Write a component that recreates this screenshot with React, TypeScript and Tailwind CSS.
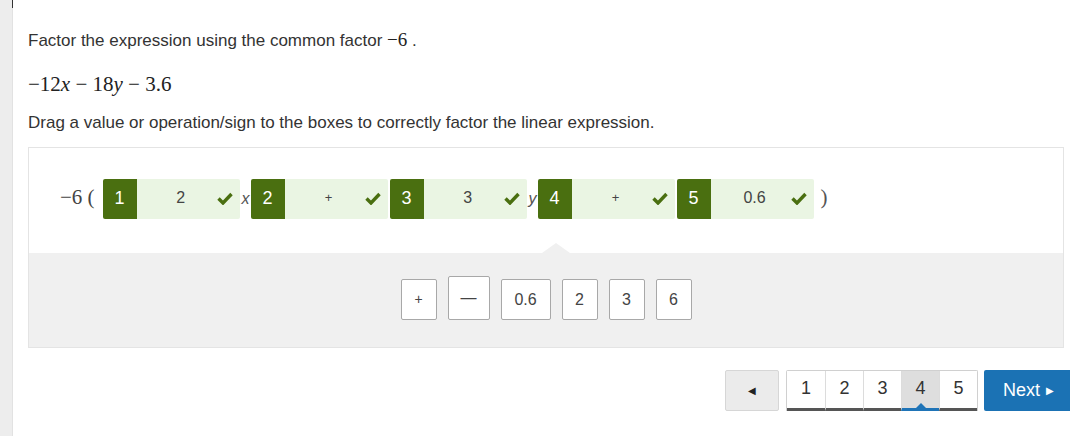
import React from "react";

const GREEN = "bg-[#4a6f10]";

function Check() {
  return (
    <svg width="16" height="13" viewBox="0 0 16 13" className="shrink-0">
      <path d="M1.5 6.5 L6 11 L14.5 2" fill="none" stroke="#4a6f10" strokeWidth="3.4" strokeLinecap="butt" strokeLinejoin="miter" />
    </svg>
  );
}

function Slot({ n, value, small }: { n: number; value: string; small?: boolean }) {
  return (
    <div className="flex h-[40px] ml-[2px]">
      <div className={`${GREEN} w-[34px] h-[40px] rounded-l-[2px] flex items-center justify-center text-white text-[18px]`}>{n}</div>
      <div className="w-[103px] h-[40px] bg-[#eaf5e3] rounded-r-[2px] flex items-center pl-[8px] pr-[7px]">
        <span className={`flex-1 text-center text-[#444] ${small ? "text-[13px]" : "text-[16px]"} -mt-[2px]`}>{value}</span>
        <Check />
      </div>
    </div>
  );
}

function Tile({ children, w, tall }: { children: React.ReactNode; w: number; tall?: boolean }) {
  return (
    <div
      className={`bg-white border border-[#a8a8a8] rounded-[2px] flex items-center justify-center text-[#444] ${tall ? "h-[44px] -mt-[3px]" : "h-[41px]"}`}
      style={{ width: w }}
    >
      {children}
    </div>
  );
}

export default function App() {
  return (
    <div className="flex w-[1070px] h-[436px] overflow-hidden bg-white font-['Liberation_Sans',Arial,sans-serif] text-[#333]">
      <div className="w-[13px] shrink-0 bg-[#ededed] border-r border-[#e2e2e2] flex justify-end">
        <div className="w-px h-[8px] bg-[#333] -mr-px" />
      </div>
      <div className="flex-1 pl-[15px] flex flex-col">
        <p className="text-[17px] mt-[30px] leading-[20px]">
          Factor the expression using the common factor{" "}
          <span className="font-['Liberation_Serif',serif] text-[19px] text-[#222]">−6</span> .
        </p>
        <p className="mt-[21px] leading-[24px] text-[21px] font-['Liberation_Serif',serif] text-[#222]">
          −12<i>x</i> − 18<i>y</i> − 3.6
        </p>
        <p className="text-[17px] mt-[17px] leading-[20px]">
          Drag a value or operation/sign to the boxes to correctly factor the linear expression.
        </p>
        <div className="mt-[14px] mr-[6px] border border-[#e4e4e4] flex flex-col">
          <div className="h-[105px] bg-white flex items-center pl-[31px] pb-[4px]">
            <span className="font-['Liberation_Serif',serif] text-[21px] text-[#444] mr-[6px] -mt-[2px]">−6 (</span>
            <Slot n={1} value="2" />
            <i className="font-['Liberation_Sans',sans-serif] text-[16px] text-[#555] ml-[2px] -mr-[1px]">x</i>
            <Slot n={2} value="+" small />
            <Slot n={3} value="3" />
            <i className="font-['Liberation_Sans',sans-serif] text-[16px] text-[#555] ml-[2px] -mr-[1px]">y</i>
            <Slot n={4} value="+" small />
            <Slot n={5} value="0.6" />
            <span className="font-['Liberation_Serif',serif] text-[21px] text-[#555] ml-[7px] -mt-[2px]">)</span>
          </div>
          <div className="relative h-[94px] bg-[#f0f0f0] flex items-start justify-center pt-[26px] gap-[11px]">
            <div className="absolute left-[513px] -top-[10px] w-0 h-0 border-l-[14px] border-r-[14px] border-b-[10px] border-l-transparent border-r-transparent border-b-[#f0f0f0]" />
            <Tile w={36}><span className="text-[14px]">+</span></Tile>
            <Tile w={42} tall><span className="text-[16px]">—</span></Tile>
            <Tile w={50}><span className="text-[16px]">0.6</span></Tile>
            <Tile w={36}><span className="text-[16px]">2</span></Tile>
            <Tile w={36}><span className="text-[16px]">3</span></Tile>
            <Tile w={36}><span className="text-[16px]">6</span></Tile>
          </div>
        </div>
        <div className="mt-[22px] flex justify-end items-start">
          <div className="w-[54px] h-[41px] bg-[#ebebeb] border border-[#d6d6d6] rounded-[2px] flex items-center justify-center text-[#222] text-[10px]">◀</div>
          <div className="ml-[7px] flex border border-[#d0d0d0] border-b-0 rounded-t-[2px]">
            {["1", "2", "3", "4", "5"].map((p, i) => (
              <div
                key={p}
                className={`relative w-[38px] h-[40px] flex items-center justify-center text-[18px] text-[#333] border-b-[3px] ${i > 0 ? "border-l border-l-[#dcdcdc]" : ""} ${p === "4" ? "bg-[#dedede] border-b-[#1f74b7]" : "bg-white border-b-[#555]"}`}
              >
                <span className="-mt-[2px]">{p}</span>
                {p === "4" && (
                  <div className="absolute bottom-0 left-1/2 -translate-x-1/2 w-0 h-0 border-l-[5px] border-r-[5px] border-b-[5px] border-l-transparent border-r-transparent border-b-[#1f74b7]" />
                )}
              </div>
            ))}
          </div>
          <div className="ml-[6px] w-[86px] h-[41px] bg-[#1b72b4] rounded-l-[2px] flex items-center pl-[19px] text-white text-[18px]">
            Next <span className="ml-[6px] text-[10px]">▶</span>
          </div>
        </div>
      </div>
    </div>
  );
}
